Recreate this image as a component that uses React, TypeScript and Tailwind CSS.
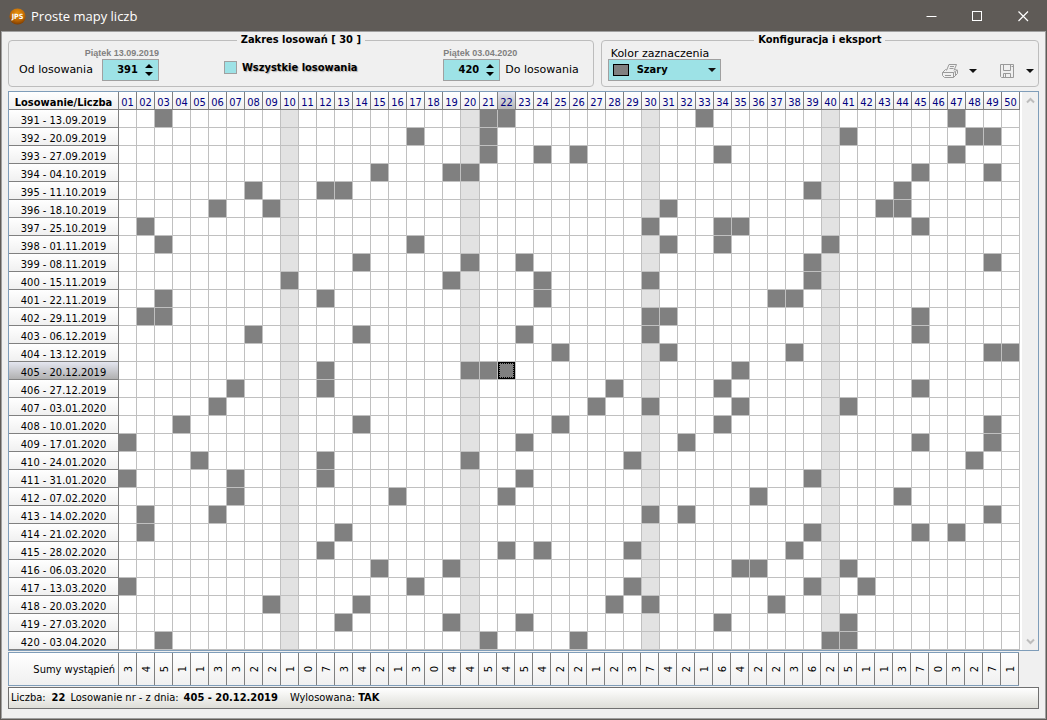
import { useState } from "react";

const FIRST_DRAW = 391;
const NUMBERS = Array.from({ length: 50 }, (_, i) => i + 1);

const DRAWS: number[][] = [
  [3, 21, 22, 33, 47],
  [17, 21, 41, 48, 49],
  [21, 24, 26, 34, 47],
  [15, 19, 20, 45, 49],
  [8, 12, 13, 39, 44],
  [6, 9, 31, 43, 44],
  [2, 30, 34, 35, 45],
  [3, 17, 31, 34, 40],
  [14, 20, 23, 39, 49],
  [10, 19, 24, 30, 39],
  [3, 12, 24, 37, 38],
  [2, 3, 30, 31, 45],
  [8, 14, 23, 30, 45],
  [25, 31, 38, 49, 50],
  [12, 20, 21, 22, 35],
  [7, 12, 28, 34, 45],
  [6, 27, 30, 35, 41],
  [4, 14, 25, 34, 49],
  [1, 23, 32, 45, 49],
  [5, 12, 20, 29, 48],
  [1, 7, 12, 23, 39],
  [7, 16, 22, 36, 44],
  [2, 6, 30, 32, 49],
  [2, 13, 39, 45, 47],
  [12, 22, 24, 29, 38],
  [15, 19, 35, 36, 41],
  [1, 17, 29, 39, 42],
  [9, 14, 28, 30, 37],
  [13, 19, 23, 34, 41],
  [3, 21, 26, 40, 41],
];

const pad = (n: number) => String(n).padStart(2, "0");

/** Draws take place weekly, starting on Friday 13.09.2019. */
function drawDate(index: number) {
  const d = new Date(Date.UTC(2019, 8, 13 + index * 7));
  return `${pad(d.getUTCDate())}.${pad(d.getUTCMonth() + 1)}.${d.getUTCFullYear()}`;
}

const drawLabel = (index: number) => `${FIRST_DRAW + index} - ${drawDate(index)}`;

const SUMS = NUMBERS.map((n) => DRAWS.filter((d) => d.includes(n)).length);

function TitleBar() {
  return (
    <header className="flex h-[30px] items-center bg-[#5f5b57] pl-2 text-white">
      <svg width="17" height="17" viewBox="0 0 18 18" aria-hidden="true">
        <defs>
          <radialGradient id="logo" cx="50%" cy="30%" r="70%">
            <stop offset="0" stopColor="#e8920f" />
            <stop offset="0.6" stopColor="#c06a06" />
            <stop offset="1" stopColor="#7d3c00" />
          </radialGradient>
        </defs>
        <circle cx="9" cy="9" r="8.6" fill="url(#logo)" />
        <text x="9" y="11.6" textAnchor="middle" fontFamily="DejaVu Sans Condensed" fontWeight="700" fontSize="7.5" fill="#fff">
          JPS
        </text>
      </svg>
      <h1 className="ml-[5px] flex-1 font-['Open_Sans',sans-serif] text-[13px] leading-5">Proste mapy liczb</h1>
      <button aria-label="Minimalizuj" className="flex h-full w-[46px] items-center justify-center">
        <svg width="11" height="11" viewBox="0 0 11 11" stroke="#fff" fill="none"><path d="M0.5 5.5h10" /></svg>
      </button>
      <button aria-label="Maksymalizuj" className="flex h-full w-[46px] items-center justify-center">
        <svg width="11" height="11" viewBox="0 0 11 11" stroke="#fff" fill="none"><rect x="0.5" y="0.5" width="9" height="9" /></svg>
      </button>
      <button aria-label="Zamknij" className="flex h-full w-[46px] items-center justify-center">
        <svg width="11" height="11" viewBox="0 0 11 11" stroke="#fff" fill="none" strokeWidth="1.2"><path d="M0.5 0.5l9.5 9.5M10 0.5l-9.5 9.5" /></svg>
      </button>
    </header>
  );
}

function Spin({ id, value, onChange }: { id: string; value: number; onChange: (v: number) => void }) {
  return (
    <div className="flex h-[22px] w-[57px] items-center border border-[#a0a0a0] bg-[#9de2e6]">
      <input
        id={id}
        value={value}
        onChange={(e) => onChange(Number(e.target.value) || 0)}
        className="w-[35px] bg-transparent text-right font-['DejaVu_Sans_Condensed','DejaVu_Sans',sans-serif] text-[11px] font-bold outline-none"
      />
      <div className="flex flex-1 flex-col items-center gap-1 pl-[2px]">
        <button aria-label="Zwiększ" onClick={() => onChange(value + 1)} className="block">
          <svg className="block" width="8" height="4" viewBox="0 0 8 4"><path d="M4 0L8 4H0z" /></svg>
        </button>
        <button aria-label="Zmniejsz" onClick={() => onChange(value - 1)} className="block">
          <svg className="block" width="8" height="4" viewBox="0 0 8 4"><path d="M0 0H8L4 4z" /></svg>
        </button>
      </div>
    </div>
  );
}

function DropArrow() {
  return (
    <svg className="block" width="8" height="4" viewBox="0 0 8 4" fill="#111"><path d="M0 0H8L4 4z" /></svg>
  );
}

function Toolbar() {
  const [from, setFrom] = useState(391);
  const [to, setTo] = useState(420);
  return (
    <div className="flex gap-[7px] font-['DejaVu_Sans',sans-serif] text-[11px]">
      <fieldset className="h-[55px] flex-[586] rounded border border-[#bdbdbd]">
        <legend className="mx-auto px-1 text-[11px] leading-4 font-bold font-['DejaVu_Sans_Condensed','DejaVu_Sans',sans-serif]">
          Zakres losowań [ 30 ]
        </legend>
        <div className="flex items-end pr-[14px] pl-[10px]">
          <div>
            <p className="text-right font-['Liberation_Sans',sans-serif] text-[9px] leading-[11px] font-bold text-[#808080]">
              Piątek 13.09.2019
            </p>
            <div className="flex items-center gap-[9px]">
              <label htmlFor="from">Od losowania</label>
              <Spin id="from" value={from} onChange={setFrom} />
            </div>
          </div>
          <label className="ml-[65px] flex h-5 items-start gap-[5px] font-bold font-['DejaVu_Sans_Condensed','DejaVu_Sans',sans-serif]">
            <input type="checkbox" className="h-[13px] w-[13px] appearance-none border border-[#a0a0a0] bg-[#9de2e6] checked:bg-[#5aa9ae]" />
            <span className="leading-[13px] [text-shadow:1px_1px_1px_#aaa]">Wszystkie losowania</span>
          </label>
          <div className="ml-auto">
            <p className="font-['Liberation_Sans',sans-serif] text-[9px] leading-[11px] font-bold text-[#808080]">
              Piątek 03.04.2020
            </p>
            <div className="flex items-center gap-[5px]">
              <Spin id="to" value={to} onChange={setTo} />
              <label htmlFor="to">Do losowania</label>
            </div>
          </div>
        </div>
      </fieldset>

      <fieldset className="h-[55px] flex-[438] rounded border border-[#bdbdbd]">
        <legend className="mx-auto px-1 text-[11px] leading-4 font-bold font-['DejaVu_Sans_Condensed','DejaVu_Sans',sans-serif]">
          Konfiguracja i eksport
        </legend>
        <div className="flex items-end justify-between pr-1 pl-[6px]">
          <div>
            <label htmlFor="color" className="block pl-[3px] leading-[11px]">Kolor zaznaczenia</label>
            <div className="relative">
              <select
                id="color"
                className="block h-[22px] w-[113px] appearance-none border border-[#a0a0a0] bg-[#9de2e6] pl-[28px] font-bold font-['DejaVu_Sans_Condensed','DejaVu_Sans',sans-serif]"
              >
                <option>Szary</option>
              </select>
              <span className="pointer-events-none absolute top-[5px] left-[5px] h-3 w-4 border border-black bg-[#808080]" />
              <span className="pointer-events-none absolute top-[9px] right-[5px]"><DropArrow /></span>
            </div>
          </div>
          <div className="flex h-5 items-center gap-[10px]">
            <button aria-label="Drukuj">
              <svg className="block" width="17" height="16" viewBox="0 0 17 16" fill="none" stroke="#9a9a9a">
                <path d="M4.5 7.5L7 1.5h7.5L12 7.5M8 3.5h4M7.5 5.5h4" />
                <path d="M4.5 6.5H3.5L0.5 9.5v3l2 2h9l4-4v-3l-2-1H12.5M0.5 9.5h11l4-2.5M11.5 9.5v5M3 12.5h6M13.5 9v3" />
              </svg>
            </button>
            <button aria-label="Opcje drukowania"><DropArrow /></button>
            <button aria-label="Zapisz" className="ml-[13px]">
              <svg className="block" width="16" height="16" viewBox="0 0 16 16" fill="none" stroke="#9a9a9a">
                <path d="M0.5 1.5h13v13h-12l-1-1zM3.5 1.5v6h7v-6M3.5 14.5v-4h7v4M5.5 11v3M11.5 3.5h2" />
              </svg>
            </button>
            <button aria-label="Opcje zapisu"><DropArrow /></button>
          </div>
        </div>
      </fieldset>
    </div>
  );
}

function cellColor(n: number, hit: boolean) {
  if (hit) return "bg-[#808080]";
  return n % 10 === 0 && n < 50 ? "bg-[#e2e2e2]" : "bg-white";
}

function DrawMap({ row, num }: { row: number; num: number }) {
  return (
    <div className="mt-1 flex border border-[#7f9db9] bg-[#f0f0f0]">
      <table className="w-full table-fixed border-separate border-spacing-0 text-[11px] leading-3">
        <colgroup>
          <col className="w-[110px]" />
          {NUMBERS.map((n) => (
            <col key={n} className={n === 20 ? "w-[19px]" : "w-[18px]"} />
          ))}
        </colgroup>
        <thead>
          <tr>
            <th className="h-[18px] border-r border-b border-[#808080] bg-linear-to-b from-white to-[#f0f0f0] p-0 pt-1 text-center font-bold whitespace-nowrap">
              Losowanie/Liczba
            </th>
            {NUMBERS.map((n) => (
              <th
                key={n}
                className={`h-[18px] border-r border-b border-[#808080] bg-linear-to-b p-0 pt-1 text-center font-normal text-[#000080] ${
                  n === num ? "from-[#e4e6f0] to-[#b8b8b8]" : "from-white to-[#f0f0f0]"
                }`}
              >
                {pad(n)}
              </th>
            ))}
          </tr>
        </thead>
        <tbody>
          {DRAWS.map((draw, i) => (
            <tr key={i}>
              <th
                className={`h-[18px] border-r border-b border-[#808080] bg-linear-to-b p-0 pt-1 text-center font-normal ${
                  i === row ? "from-[#e4e6f0] to-[#b0b0b0]" : "from-white to-[#f0f0f0]"
                }`}
              >
                {drawLabel(i)}
              </th>
              {NUMBERS.map((n) => (
                <td key={n} className={`h-[18px] border-r border-b border-[#c0c0c0] p-0 ${cellColor(n, draw.includes(n))}`}>
                  {i === row && n === num && (
                    <div className="h-[17px] border border-black">
                      <div className="h-full border border-dotted border-black" />
                    </div>
                  )}
                </td>
              ))}
            </tr>
          ))}
        </tbody>
      </table>
      <div className="flex w-[19px] shrink-0 flex-col items-center justify-between border-l-2 border-white py-[5px]">
        <button aria-label="Przewiń w górę">
          <svg className="block" width="9" height="7" viewBox="0 0 9 7" fill="none" stroke="#bdbdbd" strokeWidth="2"><path d="M1 5.5L4.5 2L8 5.5" /></svg>
        </button>
        <button aria-label="Przewiń w dół">
          <svg className="block" width="9" height="7" viewBox="0 0 9 7" fill="none" stroke="#bdbdbd" strokeWidth="2"><path d="M1 1.5L4.5 5L8 1.5" /></svg>
        </button>
      </div>
    </div>
  );
}

function SumsTable() {
  return (
    <div className="mt-px mr-5 border border-[#7f9db9]">
      <table className="w-full table-fixed border-separate border-spacing-0 text-[11px]">
        <colgroup>
          <col className="w-[110px]" />
          {NUMBERS.map((n) => (
            <col key={n} className="w-[18px]" />
          ))}
        </colgroup>
        <tbody>
          <tr>
            <th className="h-8 border-r border-[#808080] bg-linear-to-b from-white to-[#f0f0f0] p-0 pt-[2px] pr-[3px] text-right font-normal whitespace-nowrap">
              Sumy wystąpień
            </th>
            {SUMS.map((s, i) => (
              <td key={i} className="h-8 border-r border-[#808080] bg-linear-to-b from-white to-[#f0f0f0] p-0">
                <div className="flex items-center justify-center pl-[3px]">
                  <span className="-rotate-90 leading-3">{s}</span>
                </div>
              </td>
            ))}
          </tr>
        </tbody>
      </table>
    </div>
  );
}

export default function App() {
  const row = 14;
  const num = 22;
  return (
    <div className="border border-[#5f5b57] bg-[#f0f0f0] font-['DejaVu_Sans_Condensed','DejaVu_Sans',sans-serif] text-black">
      <TitleBar />
      <main className="border border-[#a0a0a0] px-[6px] pb-[9px]">
        <Toolbar />
        <DrawMap row={row} num={num} />
        <SumsTable />
        <footer className="mt-px flex h-[22px] items-center border border-[#707070] bg-linear-to-b from-white to-[#deded8] px-[2px] pt-px text-[11px] whitespace-pre">
          <span>Liczba:</span>
          <b className="ml-[6px]">{num}</b>
          <span className="ml-[5px]">Losowanie nr - z dnia:</span>
          <b className="ml-[5px]">{drawLabel(row)}</b>
          <span className="ml-3">Wylosowana:</span>
          <b className="ml-[3px]">{DRAWS[row].includes(num) ? "TAK" : "NIE"}</b>
        </footer>
      </main>
    </div>
  );
}
